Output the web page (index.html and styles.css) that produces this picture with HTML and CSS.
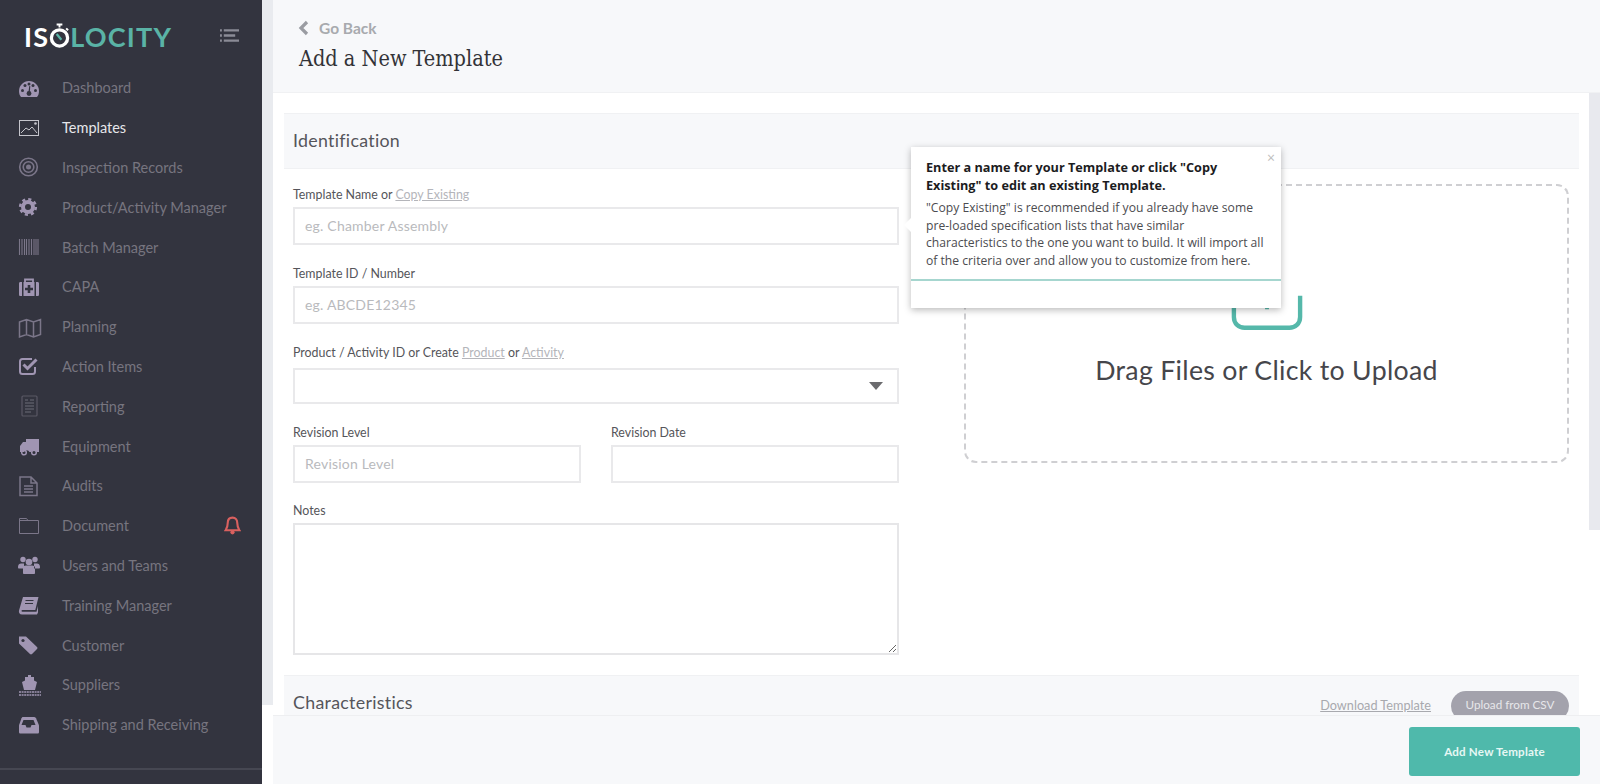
FILE: index.html
```html
<!DOCTYPE html>
<html lang="en">
<head>
<meta charset="utf-8">
<title>Add a New Template</title>
<link rel="stylesheet" href="styles.css">
</head>
<body>
<div class="app">
  <aside class="sidebar">
    <div class="brand">
      <div class="logo">
        <span class="logo-white">IS</span>
        <svg class="logo-watch" viewBox="0 0 22 26"><path d="M8 1h6M11 1v3M18 5l2 2" stroke="#fff" stroke-width="2" fill="none"/><circle cx="11" cy="15" r="8.5" fill="none" stroke="#fff" stroke-width="3.4"/><path d="M8 11l5 6" stroke="#5ab3a6" stroke-width="2.4"/></svg>
        <span class="logo-teal">LOCITY</span>
      </div>
      <svg class="menu-toggle" viewBox="0 0 20 13"><path d="M0 1h2M4 1h16M0 6.500h2M4 6.500h12M0 12h2M4 12h16" stroke="#8b8b96" stroke-width="2.400"/></svg>
    </div>
    <nav class="nav">
      <a class="nav-item bright"><svg class="icon" viewBox="0 0 26 26"><path d="M4 22C2.700 20.500 2 18.500 2 16 2 10.500 6.500 6 12 6s10 4.500 10 10c0 2.500-.7 4.500-2 6z" fill="currentColor"/><g fill="#33343f"><circle cx="5.500" cy="15.500" r="1.500"/><circle cx="8" cy="10.500" r="1.500"/><circle cx="12" cy="9" r="1.500"/><circle cx="16" cy="10.500" r="1.500"/><circle cx="18.500" cy="15.500" r="1.500"/><circle cx="12" cy="18.500" r="2.400"/><path d="M11.300 18l1-7 1 .2-.6 7z"/></g></svg><span>Dashboard</span></a>
      <a class="nav-item active"><svg class="icon" viewBox="0 0 26 26"><rect x="2.500" y="5.500" width="19" height="15" fill="none" stroke="currentColor"/><path d="M4 18l5-5 3 2 3-3 5 6" fill="none" stroke="currentColor"/><circle cx="18.500" cy="8.500" r="1.300" fill="currentColor"/></svg><span>Templates</span></a>
      <a class="nav-item"><svg class="icon" viewBox="0 0 26 26"><circle cx="11.500" cy="13" r="8.800" fill="none" stroke="currentColor" stroke-width="1.600"/><circle cx="11.500" cy="13" r="5.300" fill="none" stroke="currentColor" stroke-width="1.600"/><circle cx="11.500" cy="13" r="2.500" fill="currentColor"/></svg><span>Inspection Records</span></a>
      <a class="nav-item bright"><svg class="icon" viewBox="0 0 26 26"><circle cx="11" cy="13" r="5" fill="none" stroke="currentColor" stroke-width="4"/><circle cx="11" cy="13" r="7.800" fill="none" stroke="currentColor" stroke-width="2.600" stroke-dasharray="3.100 3.025"/></svg><span>Product/Activity Manager</span></a>
      <a class="nav-item"><svg class="icon" viewBox="0 0 26 26"><path d="M2.500 5v16M5 5v16M7.500 5v16M9.500 5v16M12 5v16M14.500 5v16M17 5v16M19 5v16M21 5v16" stroke="currentColor" stroke-width="1.100"/></svg><span>Batch Manager</span></a>
      <a class="nav-item bright"><svg class="icon" viewBox="0 0 26 26"><path d="M8 8V5.500h8V8" fill="none" stroke="currentColor" stroke-width="1.800"/><path d="M2 9.500c0-1 .6-1.500 1.500-1.500H5v14H3.500C2.600 22 2 21.500 2 20.500zM6.500 8h11v14h-11zM19 8h1.500c.9 0 1.500.5 1.500 1.500v11c0 1-.6 1.500-1.500 1.500H19z" fill="currentColor"/><path d="M10.700 11h2.600v2.700H16v2.600h-2.700V19h-2.600v-2.700H8v-2.600h2.700z" fill="#33343f"/></svg><span>CAPA</span></a>
      <a class="nav-item"><svg class="icon" viewBox="0 0 26 26"><path d="M2.500 8l7-2.500 7 2.500 7-2.500v15l-7 2.500-7-2.500-7 2.500zM9.500 5.500v15M16.500 8v15" fill="none" stroke="currentColor" stroke-width="1.500"/></svg><span>Planning</span></a>
      <a class="nav-item bright"><svg class="icon" viewBox="0 0 26 26"><path d="M18 14v4.500c0 1.500-1 2.500-2.500 2.500h-10C4 21 3 20 3 18.500v-10C3 7 4 6 5.500 6H15" fill="none" stroke="currentColor" stroke-width="2"/><path d="M6.500 11.500l4 4 9-9" fill="none" stroke="currentColor" stroke-width="3"/></svg><span>Action Items</span></a>
      <a class="nav-item dim"><svg class="icon" viewBox="0 0 26 26"><rect x="5" y="3" width="15" height="20" rx="1" fill="none" stroke="currentColor" stroke-width="1.200"/><path d="M8 7h3M13 7h4M8 10h9M8 13h9M8 16h9M8 19h6" stroke="currentColor" stroke-width="1.300"/></svg><span>Reporting</span></a>
      <a class="nav-item bright"><svg class="icon" viewBox="0 0 26 26"><path d="M9 6h13v13h-2.500a3 3 0 0 0-5.500 0h-1.500a3 3 0 0 0-5.500 0H3v-6l3-4h3z" fill="currentColor"/><circle cx="7" cy="19.500" r="2.300" fill="none" stroke="currentColor" stroke-width="1.500"/><circle cx="17" cy="19.500" r="2.300" fill="none" stroke="currentColor" stroke-width="1.500"/></svg><span>Equipment</span></a>
      <a class="nav-item"><svg class="icon" viewBox="0 0 26 26"><path d="M3 4h11l6 6v12.500H3zM14 4v6h6M7 13h9M7 16h9M7 19h9" fill="none" stroke="currentColor" stroke-width="1.500"/></svg><span>Audits</span></a>
      <a class="nav-item document"><svg class="icon" viewBox="0 0 26 26"><path d="M2.500 20.500V5.500h7l1.500 2h10.500v13zM2.500 7.500h8.500" fill="none" stroke="currentColor"/></svg><span>Document</span><svg class="bell" viewBox="0 0 16 18"><path d="M8 1.500c-3 0-4.500 2.200-4.500 5 0 4-1 5.500-2 7h13c-1-1.500-2-3-2-7 0-2.800-1.500-5-4.500-5z" fill="none" stroke="#d9605f" stroke-width="2"/><circle cx="8" cy="15.500" r="2" fill="#d9605f"/></svg></a>
      <a class="nav-item bright"><svg class="icon" viewBox="0 0 26 26"><circle cx="6" cy="7.500" r="2.700" fill="currentColor"/><circle cx="18" cy="7.500" r="2.700" fill="currentColor"/><circle cx="12" cy="10" r="3.300" fill="currentColor"/><path d="M1 15c0-2.500 1.500-3.500 3-3.500h3v5H2c-.6 0-1-.5-1-1.500zM23 15c0-2.500-1.500-3.500-3-3.500h-3v5h5c.6 0 1-.5 1-1.500zM6 16c0-1.800 1.500-2.500 3-2.500h6c1.500 0 3 .7 3 2.500v5c0 .8-.5 1-1 1H7c-.5 0-1-.2-1-1z" fill="currentColor"/></svg><span>Users and Teams</span></a>
      <a class="nav-item bright"><svg class="icon" viewBox="0 0 26 26"><path d="M6 5h15.500l-3.200 13H5.500c-1.200 0-1.500 1.700 0 1.700H19.500L21 14v6.500l-1 2H5c-2.500 0-3.500-2-3-4z" fill="currentColor"/><path d="M8.500 8.500h8M8 11.500h8" stroke="#33343f" stroke-width="1.200"/></svg><span>Training Manager</span></a>
      <a class="nav-item bright"><svg class="icon" viewBox="0 0 26 26"><path d="M2 4.500h7l11 10.500c.6.600.6 1.400 0 2l-5 5c-.6.600-1.400.6-2 0L2 11.500z" fill="currentColor"/><circle cx="6" cy="8.500" r="1.600" fill="#33343f"/></svg><span>Customer</span></a>
      <a class="nav-item bright"><svg class="icon" viewBox="0 0 26 26"><path d="M11 3h3v2h3v3.500l3 1.500-2 8H7l-2-8 3-1.500V5h3z" fill="currentColor"/><path d="M2 20h22M2 23h22" stroke="currentColor" stroke-width="1.600" stroke-dasharray="2 .6"/></svg><span>Suppliers</span></a>
      <a class="nav-item bright"><svg class="icon" viewBox="0 0 26 26"><path d="M6 5h11c.9 0 1.500.4 2 1.200l3 7V20c0 1-.6 1.500-1.500 1.500h-17C2.600 21.500 2 21 2 20v-6.800l2.500-7C5 5.400 5.300 5 6 5z" fill="currentColor"/><path d="M6.500 8h10l2 5h-4l-1 2.500h-4L8.500 13h-4z" fill="#33343f"/></svg><span>Shipping and Receiving</span></a>
    </nav>
    <div class="sidebar-foot"></div>
  </aside>
  <div class="rail"></div>
  <div class="main">
    <header class="page-head">
      <a class="back"><svg class="back-icon" viewBox="0 0 11 16"><path d="M9 2L3 8l6 6" fill="none" stroke="#9a9ca2" stroke-width="3.200"/></svg><span>Go Back</span></a>
      <h1 class="title">Add a New Template</h1>
    </header>
    <div class="content">
      <div class="page">
        <section class="section">
          <h2 class="section-head">Identification</h2>
          <div class="section-body">
            <form class="form">
              <div class="field">
                <label class="label">Template Name or <a class="link">Copy Existing</a></label>
                <input class="input" placeholder="eg. Chamber Assembly">
              </div>
              <div class="field">
                <label class="label">Template ID / Number</label>
                <input class="input" placeholder="eg. ABCDE12345">
              </div>
              <div class="field">
                <label class="label">Product / Activity ID or Create <a class="link">Product</a> or <a class="link">Activity</a></label>
                <div class="select"><span class="caret"></span></div>
              </div>
              <div class="field-row">
                <div>
                  <label class="label">Revision Level</label>
                  <input class="input" placeholder="Revision Level">
                </div>
                <div>
                  <label class="label">Revision Date</label>
                  <input class="input">
                </div>
              </div>
              <div class="field">
                <label class="label">Notes</label>
                <textarea class="textarea"></textarea>
              </div>
            </form>
            <div class="upload">
              <div class="dropzone">
                <svg class="tray" viewBox="0 0 76 100"><path d="M38 6v72" stroke="#55b8aa" stroke-width="4" fill="none"/><path d="M4 64v22c0 7 5 11 11 11h46c6 0 11-4 11-11V64" stroke="#55b8aa" stroke-width="4.500" fill="none"/></svg>
                <p class="drop-text">Drag Files or Click to Upload</p>
              </div>
            </div>
          </div>
        </section>
        <section class="section">
          <div class="chars-head">
            <h2 class="chars-title">Characteristics</h2>
            <div class="chars-actions">
              <a class="download">Download Template</a>
              <button class="pill" type="button">Upload from CSV</button>
            </div>
          </div>
        </section>
      </div>
      <div class="scrollbar"></div>
    </div>
    <footer class="page-foot">
      <button class="primary" type="button">Add New Template</button>
    </footer>
  </div>
  <div class="popover">
    <span class="pop-close">×</span>
    <div class="pop-body">
      <h3 class="pop-title">Enter a name for your Template or click "Copy Existing" to edit an existing Template.</h3>
      <p class="pop-text">"Copy Existing" is recommended if you already have some pre-loaded specification lists that have similar<br>characteristics to the one you want to build. It will import all of the criteria over and allow you to customize from here.</p>
    </div>
    <div class="pop-foot"></div>
  </div>
</div>
</body>
</html>
```
FILE: styles.css
```css
* { box-sizing: border-box; }
html, body { margin: 0; padding: 0; height: 100%; background: #fff; overflow: hidden; }
body { font-family: "Lato", "Liberation Sans", sans-serif; color: #4a4a4f; }
.app { position: relative; display: flex; width: 1600px; height: 784px; overflow: hidden; }

/* sidebar */
.sidebar { width: 262px; flex: none; display: flex; flex-direction: column; background: #33343f; }
.brand { height: 68px; flex: none; display: flex; align-items: flex-start; justify-content: space-between; padding: 25px 23px 0 24px; }
.logo { display: flex; align-items: center; height: 24px; font-size: 27px; font-weight: 700; letter-spacing: 1.200px; line-height: 24px; }
.logo-white { color: #fff; }
.logo-teal { color: #5ab3a6; }
.logo-watch { width: 21px; height: 26px; margin: -3px 0 0 0; flex: none; }
.menu-toggle { width: 19px; height: 13px; margin-top: 4px; }
.nav { display: flex; flex-direction: column; }
.nav-item { display: flex; align-items: center; height: 39.800px; padding: 0 21px 0 17px; font-size: 14.500px; color: #77757f; white-space: nowrap; }
.nav-item span { margin-left: 19px; }
.icon { width: 26px; height: 26px; flex: none; color: #7b7689; }
.bright .icon { color: #a095b2; }
.dim .icon { color: #5a5965; }
.active { color: #e6e6ea; }
.active .icon { color: #c5c5cc; }
.bell { width: 17px; height: 19px; margin-left: auto; flex: none; }
.sidebar-foot { margin-top: auto; height: 16px; border-top: 2px solid #464752; }

/* grey rail */
.rail { width: 11px; height: 705px; flex: none; background: #e9ebef; }

/* main */
.main { flex: 1; min-width: 0; display: flex; flex-direction: column; }
.page-head { height: 93px; flex: none; padding: 19px 26px 0; background: #f7f8fa; border-bottom: 1px solid #f0f1f3; }
.back { display: flex; align-items: center; height: 18px; margin-left: -1px; font-size: 15.500px; font-weight: 700; color: #a8aaae; }
.back-icon { width: 11px; height: 16px; flex: none; margin-right: 10px; }
.title { margin: 7px 0 0; font-family: "DejaVu Serif Condensed", "DejaVu Serif", serif; font-size: 21.500px; line-height: 30px; font-weight: 400; color: #333337; }

.content { flex: 1; min-height: 0; display: flex; overflow: hidden; }
.page { flex: 1; min-width: 0; padding: 20px 10px 0 11px; }
.scrollbar { width: 11px; height: 437px; flex: none; background: #e8e9ee; }

.section-head { margin: 0; height: 56px; padding: 0 9px 2px; display: flex; align-items: center; font-size: 17.800px; font-weight: 400; letter-spacing: .3px; color: #55555a; background: #f7f8fa; border-top: 1px solid #f0f1f3; border-bottom: 1px solid #f0f1f3; }
.section-body { display: grid; grid-template-columns: 606px 605px; column-gap: 65px; padding: 0 10px 0 9px; }

.form { padding-top: 17px; }
.field { margin-bottom: 20px; }
.field-row { display: grid; grid-template-columns: 288px 288px; column-gap: 30px; margin-bottom: 19px; }
.label { display: block; height: 16px; margin-bottom: 5px; font-size: 12.400px; line-height: 17px; color: #55555a; white-space: nowrap; }
.link { color: #b4b5ba; text-decoration: underline; }
.input { display: block; width: 100%; height: 38px; padding: 0 10px 2px; border: 2px solid #e9e9eb; border-radius: 0; outline: 0; background: #fff; font: 14px "Lato", sans-serif; letter-spacing: .2px; color: #4a4a4f; }
.input::placeholder { color: #b9babd; opacity: 1; }
.select { display: flex; align-items: center; justify-content: flex-end; height: 36px; margin-top: 8px; padding-right: 14px; border: 2px solid #e9e9eb; background: #fff; }
.caret { width: 0; height: 0; border-left: 7px solid transparent; border-right: 7px solid transparent; border-top: 8px solid #6b6b6e; }
.textarea { display: block; width: 100%; height: 132px; padding: 8px 10px; border: 2px solid #e6e6e8; border-radius: 0; outline: 0; background: #fff; resize: vertical; }

.upload { padding-top: 15px; }
.dropzone { display: flex; flex-direction: column; align-items: center; height: 279px; padding-top: 46px; border: 2px dashed #cfcfd2; border-radius: 12px; }
.tray { width: 74px; height: 100px; flex: none; }
.drop-text { margin: 23px 0 0; font-size: 26.700px; line-height: 30px; letter-spacing: .3px; color: #46464b; }

.chars-head { display: flex; align-items: flex-start; justify-content: space-between; height: 56px; padding: 14px 10px 0 9px; background: #f7f8fa; border-top: 1px solid #f0f1f3; }
.chars-title { margin: 0; font-size: 17.800px; line-height: 24px; font-weight: 400; letter-spacing: .3px; color: #55555a; }
.chars-actions { display: flex; align-items: flex-start; gap: 20px; padding-top: 1px; }
.download { margin-top: 6px; font-size: 12.700px; line-height: 16px; color: #a8a9ae; text-decoration: underline; }
.pill { width: 118px; height: 30px; padding-bottom: 5px; border: 0; border-radius: 15px; background: #a3a2ac; font: 11.700px "Lato", sans-serif; color: #e7e7ea; }

.page-foot { position: relative; height: 69px; flex: none; display: flex; justify-content: flex-end; padding: 11px 20px 0 0; background: #f7f8fa; border-top: 1px solid #eeeff1; }
.primary { width: 171px; height: 49px; border: 0; border-radius: 3px; background: #4fb9ab; font: 700 11.600px "Lato", sans-serif; letter-spacing: .2px; color: #e6f7f4; }

/* tour popover */
.popover { position: absolute; left: 911px; top: 147px; width: 370px; height: 161px; display: flex; flex-direction: column; background: #fff; box-shadow: 0 2px 7px rgba(0, 0, 0, .28); font-family: "Open Sans", sans-serif; }
.popover::before { content: ""; position: absolute; left: -5px; top: 73px; width: 10px; height: 10px; background: #fff; transform: rotate(45deg); }
.pop-close { position: absolute; right: 6px; top: 3px; font-size: 14px; line-height: 16px; color: #bdbdbd; }
.pop-body { position: relative; flex: 1; padding: 12px 10px 0 15px; border-bottom: 2px solid #a6d6cf; }
.pop-title { margin: 0 0 5px; padding-right: 5px; font-size: 12.700px; line-height: 17.500px; font-weight: 700; color: #1c1c1e; }
.pop-text { margin: 0; font-size: 12.150px; line-height: 17.600px; color: #4c4c50; }
.pop-foot { height: 27px; flex: none; }
```
